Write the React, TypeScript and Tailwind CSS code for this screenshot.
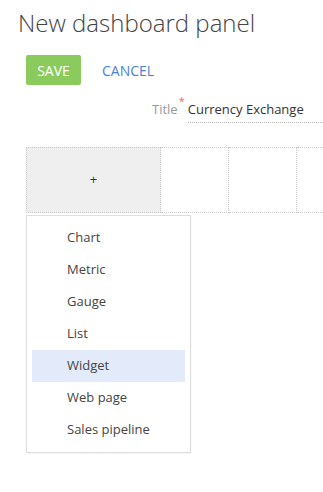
import React from 'react';

const items = ['Chart', 'Metric', 'Gauge', 'List', 'Widget', 'Web page', 'Sales pipeline'];

const App: React.FC = () => {
  return (
    <div className="w-[323px] h-[492px] overflow-hidden bg-white font-['Open_Sans',sans-serif] relative">
      <h1 className="pl-[18px] pt-[6px] text-[24px] leading-[34px] font-light text-[#444]">New dashboard panel</h1>

      {/* Actions */}
      <div className="flex items-center pl-[26px] mt-[15px]">
        <button className="w-[55px] h-[30px] bg-[#8bcb5e] text-white text-[14px] rounded-[2px]">SAVE</button>
        <button className="ml-[21px] text-[14px] text-[#4b7fd8]">CANCEL</button>
      </div>

      {/* Title field */}
      <div className="flex items-baseline mt-[11px] pl-[152px]">
        <span className="text-[13px] text-[#999] leading-[18px]">Title</span>
        <span className="text-[11px] text-[#f06a5a] self-start -mt-[3px] ml-[1px]">*</span>
        <div className="ml-[3px] flex-1 border-b border-dotted border-[#bbb] pb-[2px]">
          <span className="text-[13px] text-[#333] leading-[18px]">Currency Exchange</span>
        </div>
      </div>

      {/* Grid */}
      <div className="flex mt-[24px] ml-[26px] h-[66px]">
        <div className="w-[135px] bg-[#efefef] border border-dotted border-[#c8c8c8] flex items-center justify-center text-[13px] text-[#333]">+</div>
        <div className="w-[68px] border-y border-r border-dotted border-[#c8c8c8]" />
        <div className="w-[68px] border-y border-r border-dotted border-[#c8c8c8]" />
        <div className="flex-1 border-y border-dotted border-[#c8c8c8]" />
      </div>

      {/* Menu */}
      <div className="absolute left-[26px] top-[215px] w-[165px] border border-[#ddd] bg-white py-[6px] px-[5px] shadow-[0_1px_2px_rgba(0,0,0,0.05)]">
        {items.map((item) => (
          <div
            key={item}
            className={`h-[32px] flex items-center pl-[35px] text-[13px] text-[#444] ${item === 'Widget' ? 'bg-[#e3eafa]' : ''}`}
          >
            {item}
          </div>
        ))}
      </div>
    </div>
  );
};

export default App;
